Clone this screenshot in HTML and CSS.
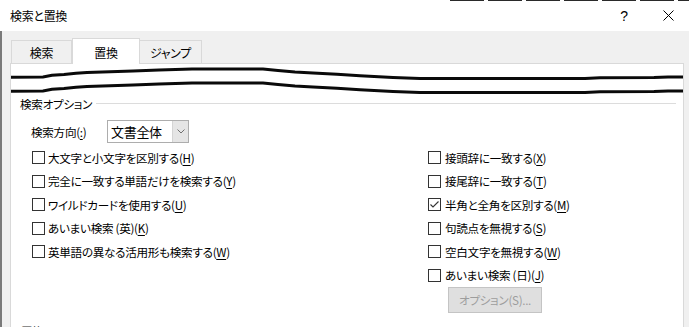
FILE: index.html
```html
<!DOCTYPE html>
<html lang="ja">
<head>
<meta charset="utf-8">
<title>検索と置換</title>
<link rel="stylesheet" href="styles.css">
</head>
<body>
<div class="window">
  <div class="titlebar">
    <div class="title">検索と置換</div>
    <div class="help">?</div>
    <svg class="close" width="11" height="11" viewBox="0 0 11 11"><path d="M0.5 0.5 L10.5 10.5 M10.5 0.5 L0.5 10.5" stroke="#000" stroke-width="1" fill="none"/></svg>
  </div>
  <div class="main">
    <div class="tabs">
      <div class="tab t1">検索</div>
      <div class="tab active">置換</div>
      <div class="tab t3">ジャンプ</div>
    </div>
    <div class="panel">
      <svg class="cut" viewBox="11 64 672 34" width="672" height="34">
        <polyline fill="none" stroke="#0a0a0a" stroke-width="3" points="10,77.3 43,77 52,75.3 64,74.5 76,73.3 87,72.5 110,71.7 133,71 159,70 192,69 263,69 278,70.5 295,72 313,73 337,74.3 360,75.8 393,77.6 420,78.6 585,78.6 600,77.8 654,77.6 668,77 683,77"/>
        <polyline fill="none" stroke="#0a0a0a" stroke-width="3" points="10,91.3 43,91 52,89.3 64,88.5 76,87.3 87,86.5 110,85.7 133,85 159,84 192,83 263,83 278,84.5 295,86 313,87 337,88.3 360,89.8 393,91.6 420,92.6 585,92.6 600,91.8 654,91.6 668,91 683,91"/>
      </svg>
      <div class="group-head"><span class="group-label">検索オプション</span><span class="group-line"></span></div>
      <div class="dir-row">
        <span class="dir-label">検索方向(<u>:</u>)</span>
        <div class="select">
          <span class="select-value">文書全体</span>
          <span class="select-btn"><svg width="8" height="5" viewBox="0 0 8 5"><path d="M0.5 0.5 L4 4 L7.5 0.5" stroke="#707070" fill="none" stroke-width="1"/></svg></span>
        </div>
      </div>
      <div class="checks">
        <div class="col col-left">
          <label class="check"><span class="box"></span><span class="txt">大文字と小文字を区別する(<u>H</u>)</span></label>
          <label class="check"><span class="box"></span><span class="txt">完全に一致する単語だけを検索する(<u>Y</u>)</span></label>
          <label class="check"><span class="box"></span><span class="txt">ワイルドカードを使用する(<u>U</u>)</span></label>
          <label class="check"><span class="box"></span><span class="txt">あいまい検索 (英)(<u>K</u>)</span></label>
          <label class="check"><span class="box"></span><span class="txt">英単語の異なる活用形も検索する(<u>W</u>)</span></label>
        </div>
        <div class="col col-right">
          <label class="check"><span class="box"></span><span class="txt">接頭辞に一致する(<u>X</u>)</span></label>
          <label class="check"><span class="box"></span><span class="txt">接尾辞に一致する(<u>T</u>)</span></label>
          <label class="check"><span class="box checked"><svg width="11" height="11" viewBox="0 0 11 11"><path d="M1.5 5.5 L4 8 L9.5 2.5" stroke="#333" stroke-width="1.1" fill="none"/></svg></span><span class="txt">半角と全角を区別する(<u>M</u>)</span></label>
          <label class="check"><span class="box"></span><span class="txt">句読点を無視する(<u>S</u>)</span></label>
          <label class="check"><span class="box"></span><span class="txt">空白文字を無視する(<u>W</u>)</span></label>
          <label class="check"><span class="box"></span><span class="txt">あいまい検索 (日)(<u>J</u>)</span></label>
          <div class="btn">オプション(S)...</div>
        </div>
      </div>
      <div class="next-label">置換</div>
    </div>
  </div>
</div>
</body>
</html>
```

FILE: styles.css
```css
* { box-sizing: border-box; }
body {
  margin: 0;
  width: 689px;
  height: 327px;
  overflow: hidden;
  background: #fff;
  color: #000;
  font-family: "Noto Sans CJK JP", "Noto Sans", sans-serif;
  font-size: 11.6px;
  letter-spacing: -0.3px;
  font-feature-settings: "palt";
}
.window {
  display: flex;
  flex-direction: column;
  height: 327px;
}
.titlebar {
  flex: none;
  height: 31px;
  display: flex;
  align-items: center;
  padding: 0 15px 0 10px;
  background: #fff repeating-linear-gradient(to right, #2a2a2a 0 34px, transparent 34px 38px) no-repeat right top;
  background-size: 239px 1px;
}
.title {
  flex: 1;
  line-height: 12px;
  font-size: 12px;
}
.help {
  font-family: "Liberation Sans", sans-serif;
  font-size: 14px;
  line-height: 14px;
  margin-right: 35px;
  letter-spacing: 0;
}
.close { display: block; }
.main {
  flex: 1;
  min-height: 0;
  display: flex;
  flex-direction: column;
  background: #f0f0f0;
  border-left: 2px solid #7a7a7a;
  padding: 0 5px 0 8px;
}
.tabs {
  flex: none;
  height: 32px;
  display: flex;
  align-items: flex-end;
  padding-left: 1px;
}
.tab {
  height: 23px;
  border: 1px solid #d9d9d9;
  border-bottom: none;
  background: #f0f0f0;
  display: flex;
  align-items: center;
  justify-content: center;
  padding-top: 2px;
  line-height: 12px;
  font-size: 12px;
}
.t1 { width: 61px; }
.t3 { width: 62px; border-left: none; }
.tab.active {
  width: 68px;
  height: 26px;
  margin-bottom: -1px;
  background: #fff;
  position: relative;
  z-index: 1;
  padding-top: 2px;
}
.panel {
  flex: 1;
  background: #fff;
  border: 1px solid #d9d9d9;
  border-bottom: none;
}
.cut {
  display: block;
}
.group-head {
  display: flex;
  align-items: center;
  height: 11px;
  margin: 0 7px 0 9px;
}
.group-label {
  line-height: 12px;
}
.group-line {
  flex: 1;
  height: 1px;
  background: #dcdcdc;
  margin-left: 4px;
}
.dir-row {
  display: flex;
  align-items: center;
  height: 23px;
  margin-top: 11px;
  padding-left: 20px;
}
.dir-label {
  width: 76px;
  line-height: 12px;
}
.select {
  width: 82px;
  height: 23px;
  border: 1px solid #adadad;
  display: flex;
}
.select-value {
  flex: 1;
  display: flex;
  align-items: center;
  padding-left: 3px;
  font-size: 13px;
}
.select-btn {
  width: 16px;
  background: #e5e5e5;
  border-left: 1px solid #d4d4d4;
  display: flex;
  align-items: center;
  justify-content: center;
}
.select-btn svg { display: block; }
.checks {
  display: flex;
  margin-top: 3px;
  padding-left: 21px;
}
.col-left { width: 396px; }
.check {
  display: flex;
  align-items: center;
  height: 23.5px;
  gap: 3px;
}
.col-right .check { gap: 4px; }
.box {
  flex: none;
  width: 13px;
  height: 13px;
  border: 1px solid #333;
  background: #fff;
  display: flex;
  align-items: center;
  justify-content: center;
}
.box svg { display: block; }
.txt { line-height: 12px; }
u { text-underline-offset: 2px; }
.btn {
  margin-left: 20px;
  width: 94px;
  height: 26px;
  background: #dfdfdf;
  border: 1px solid #c4c4c4;
  color: #9d9d9d;
  display: flex;
  align-items: center;
  justify-content: center;
  line-height: 12px;
}
.next-label {
  margin: 12px 0 0 10px;
  line-height: 12px;
  color: #333;
}
```
